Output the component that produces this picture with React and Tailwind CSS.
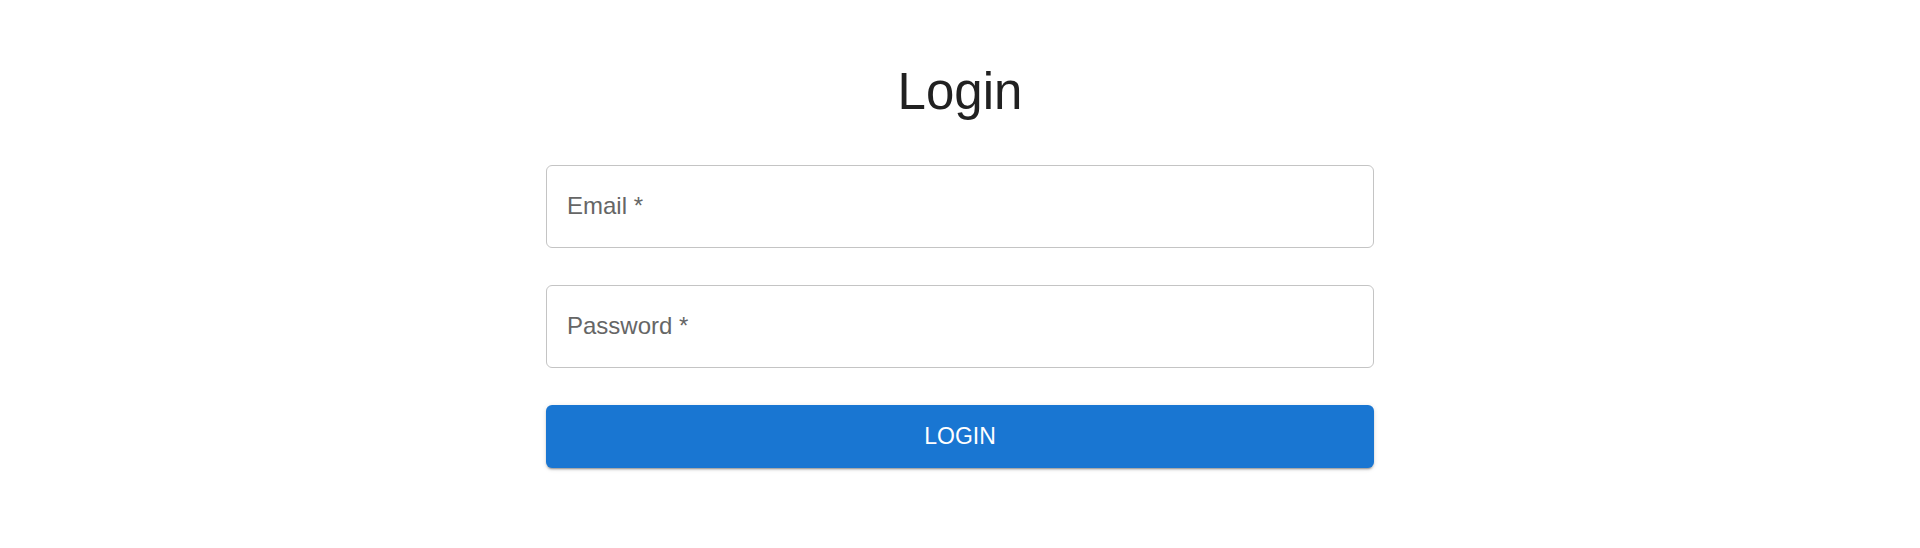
export default function App() {
  return (
    <div className="min-h-screen bg-white font-['Liberation_Sans',Arial,sans-serif]">
      <div className="mx-auto w-[828px] pt-[60px]">
        <h1 className="text-center text-[51px] leading-[63px] text-[#212121]">Login</h1>

        <form className="mt-[42px] flex flex-col gap-[37px]" onSubmit={(e) => e.preventDefault()}>
          <div className="flex h-[83px] items-center rounded-[6px] border border-[#c4c4c4] px-[20px] pb-[2px]">
            <span className="text-[24px] leading-none text-[#666666]">Email *</span>
          </div>

          <div className="flex h-[83px] items-center rounded-[6px] border border-[#c4c4c4] px-[20px] pb-[2px]">
            <span className="text-[24px] leading-none text-[#666666]">Password *</span>
          </div>

          <button
            type="submit"
            className="h-[63px] w-full rounded-[6px] bg-[#1976d2] text-[23px] uppercase text-white shadow-[0_3px_1px_-2px_rgba(0,0,0,0.2),0_2px_2px_0_rgba(0,0,0,0.14),0_1px_5px_0_rgba(0,0,0,0.12)]"
          >
            Login
          </button>
        </form>
      </div>
    </div>
  )
}
